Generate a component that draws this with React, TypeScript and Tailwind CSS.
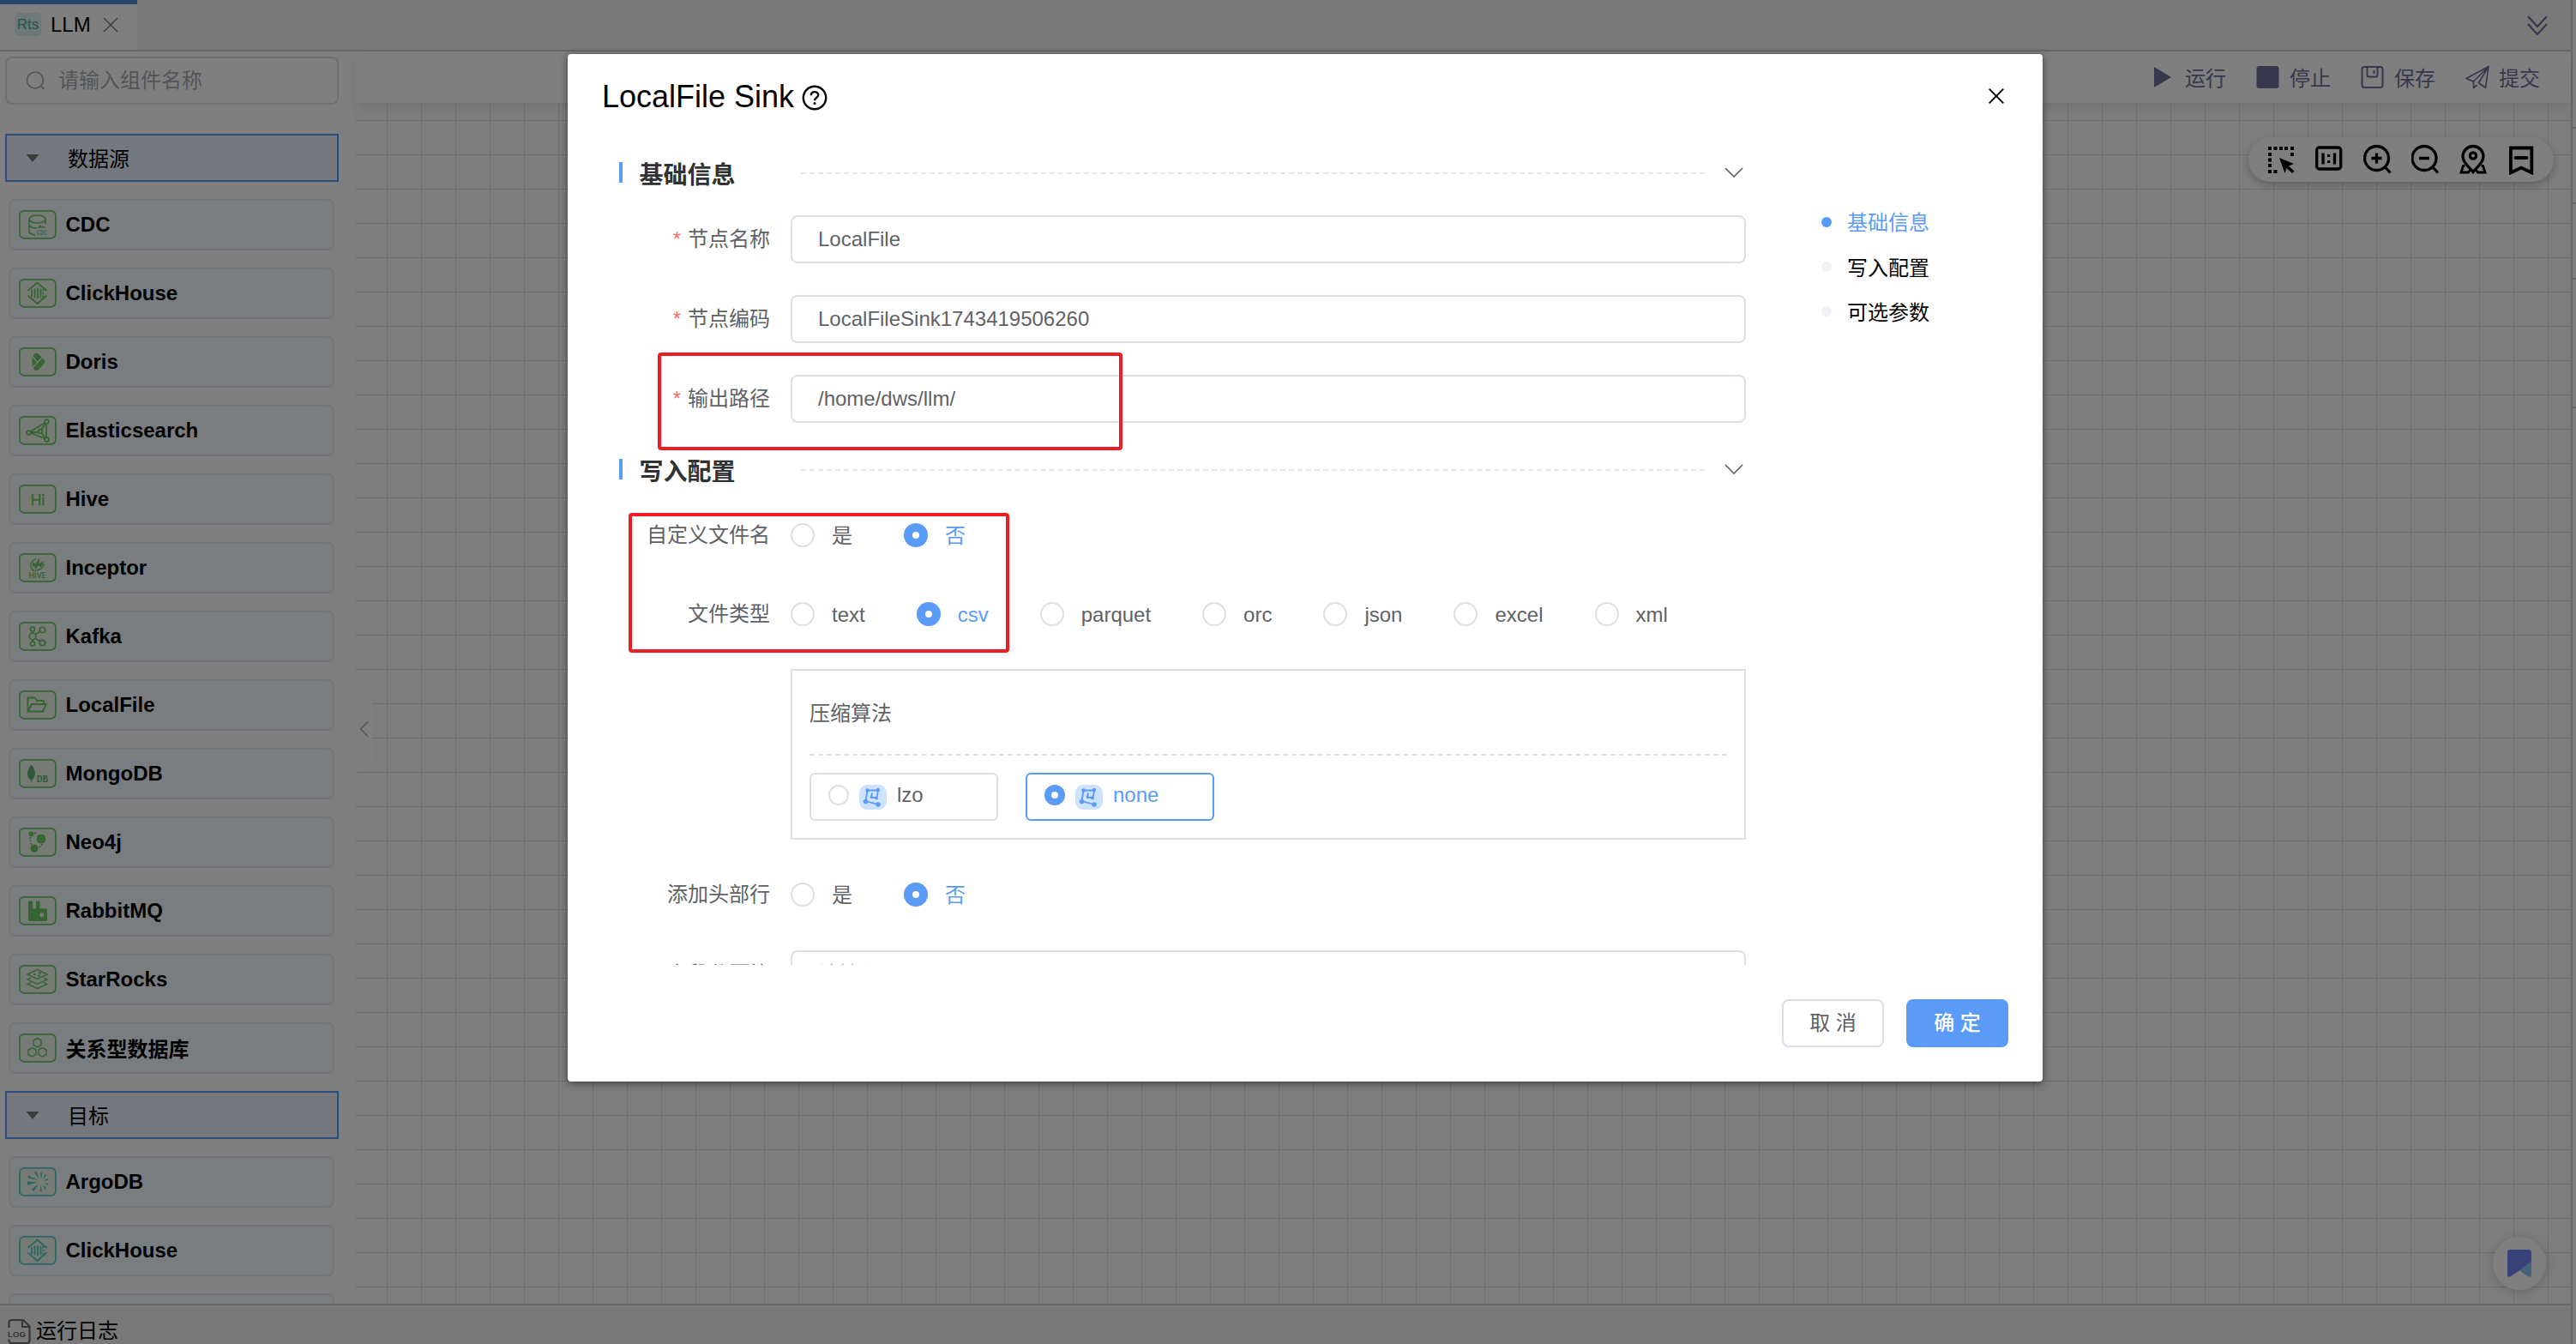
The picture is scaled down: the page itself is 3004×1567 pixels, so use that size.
import React from "react";

const GREEN = "#6cca66";
const TEAL = "#56cbc8";

/* ---------- palette icons, drawn on a 44 x 34 tile ---------- */

function Tile({ color = GREEN, children }: { color?: string; children: React.ReactNode }) {
  return (
    <svg width="44" height="34" viewBox="0 0 44 34" fill="none" stroke={color} strokeWidth="1.7" className="shrink-0">
      <rect x="0.9" y="0.9" width="42" height="32" rx="5" fill="#ecf7ec" />
      {children}
    </svg>
  );
}

const CdcIcon = () => (
  <Tile>
    <ellipse cx="21.5" cy="10.5" rx="9.5" ry="4.5" />
    <path d="M12 10.500v14c0 2.500 3 4 7 4.500M31 10.500v6M12 17c1 3 5 4 9 4M30.500 20h-7l2.500-2" />
    <text x="21" y="28.500" fontSize="7.500" textLength="12" lengthAdjust="spacingAndGlyphs" fontFamily="Liberation Serif" fontWeight="bold" fill={GREEN} stroke="none">CDC</text>
  </Tile>
);

const ClickHouseIcon = ({ color = GREEN }: { color?: string }) => (
  <Tile color={color}>
    <path d="M10.500 14 21.500 4.500 32.500 14M10.500 19.500 21.500 29 32.500 19.500" strokeWidth="1.800" />
    <path d="M15 13v8M18.500 11.500v11M22 11v12M25.500 11.500v11M28.500 12v2.500M28.500 16v2M28.500 19.500v2.500" strokeWidth="1.800" />
  </Tile>
);

const DorisIcon = () => (
  <Tile>
    <g fill={GREEN} stroke="none">
      <path d="M17 10.500c0-3 3-5 5.500-3l4 4-5 5z" />
      <path d="M15.500 12v11l5.500-5.500z" />
      <path d="M27.500 12.500 30 15.500c1 1.500 0 3-1 4l-6 6.500c-3 2.500-6.500 0-5.500-3z" />
    </g>
  </Tile>
);

const ElasticIcon = () => (
  <Tile>
    <path d="M12 19 32 7v20zM12 19h13M25 18l7-11M25 18l7 9" strokeWidth="1.800" />
    <g fill="#ecf7ec" strokeWidth="1.800">
      <circle cx="11.500" cy="19.500" r="2.400" />
      <circle cx="32.500" cy="6.500" r="2.400" />
      <circle cx="32.500" cy="27.500" r="2.400" />
      <circle cx="25" cy="18" r="2.400" />
    </g>
  </Tile>
);

const HiveIcon = () => (
  <Tile>
    <text x="13.500" y="23.500" fontSize="17" fontFamily="Lato" fill={GREEN} stroke={GREEN} strokeWidth="0.500">Hi</text>
  </Tile>
);

const InceptorIcon = () => (
  <Tile>
    <path d="M20 7c-5 1-7 5-6 9s4 5 7 4M29 12c0 4-3 7-8 8" strokeWidth="1.300" />
    <path d="M16 17V9l3 4 5-8v7l5-3-3 8-3-3-4 5-1-5z" fill={GREEN} stroke="none" />
    <text x="11.500" y="29" fontSize="8.500" textLength="20" lengthAdjust="spacingAndGlyphs" fontFamily="Lato" fontWeight="bold" fill={GREEN} stroke="none">HIVE</text>
  </Tile>
);

const KafkaIcon = () => (
  <Tile>
    <path d="M16 11v3M16 20v3M19 15l6-4M19 19l6 4" />
    <g strokeWidth="1.700">
      <circle cx="16" cy="17" r="3.800" />
      <circle cx="16" cy="8.500" r="2.500" />
      <circle cx="16" cy="25.500" r="2.500" />
      <circle cx="27.500" cy="9.500" r="3.200" />
      <circle cx="27.500" cy="24.500" r="3.200" />
    </g>
  </Tile>
);

const FolderIcon = () => (
  <Tile>
    <path d="M10.500 24.500V8.500h8l2.500 3.500h8v4M10.500 24.500l4.500-8.500h17l-4 8.500z" strokeWidth="1.900" />
  </Tile>
);

const MongoIcon = () => (
  <Tile>
    <path d="M14.500 7c5 6 6 12.500 0 18-6-5.500-5-12 0-18zM14.500 24v3.500" fill="#5fb070" stroke="#5fb070" strokeWidth="0.800" />
    <text x="20.500" y="26.500" fontSize="12" textLength="13.500" lengthAdjust="spacingAndGlyphs" fontFamily="Liberation Serif" fontWeight="bold" fill="#5fb070" stroke="none">DB</text>
  </Tile>
);

const NeoIcon = () => (
  <Tile>
    <g fill={GREEN} stroke="none">
      <circle cx="14.500" cy="7.500" r="3" />
      <circle cx="26" cy="13" r="5.500" />
      <circle cx="18" cy="24" r="4.500" />
    </g>
    <path d="M18 6.500c2-.5 3 0 4 .5M13.500 11c-.5 4 0 7 2 9.500M27 19c-.5 2-2 3-4 4" strokeDasharray="2 1.500" />
  </Tile>
);

const RabbitIcon = () => (
  <Tile>
    <path
      d="M11 6.500a1 1 0 0 1 1-1h3a1 1 0 0 1 1 1v8h4v-8a1 1 0 0 1 1-1h2.500a1 1 0 0 1 1 1v8H32a1 1 0 0 1 1 1V28a1 1 0 0 1-1 1H12a1 1 0 0 1-1-1zM24.500 19.500v4.500H29v-4.500z"
      fill={GREEN}
      fillRule="evenodd"
      stroke="none"
    />
  </Tile>
);

const StarRocksIcon = () => (
  <Tile>
    <path d="M21.500 5.500 33 11l-11.500 5.500L10 11zM14 15l-4 2 11.500 5.500L33 17l-4-2M14 20.500l-4 2 11.500 5L33 22.500l-4-2M17 11h3M23 9.500h3M22 12.500h3" strokeWidth="1.500" />
  </Tile>
);

const HexIcon = () => (
  <Tile>
    <path d="M21.500 5.500 26 8v5.500L21.500 16 17 13.500V8zM15.500 16.500 20 19v5.500L15.500 27 11 24.500V19zM27.500 16.500 32 19v5.500L27.500 27 23 24.500V19z" strokeWidth="1.500" />
  </Tile>
);

const ArgoIcon = () => (
  <Tile color={TEAL}>
    <g fill={TEAL} stroke="none">
      <path d="M23 15 11 9.500l-.5 3zM24 14 17.500 5.500l3-.5zM26 13.500 25 6l2.500.5zM22 17.500 10 16.500v4zM23 19.500l-8.500 6 3 2.500zM25.500 20.500 24.500 28h2.500zM28 20l2.500 6.500 1.500-2.500zM29 18l5 3v-2zM29 16l5-3.500v2.500zM28 14l2.500-6 1.500 2z" />
    </g>
  </Tile>
);

const SOURCES: [string, React.ComponentType][] = [
  ["CDC", CdcIcon],
  ["ClickHouse", ClickHouseIcon],
  ["Doris", DorisIcon],
  ["Elasticsearch", ElasticIcon],
  ["Hive", HiveIcon],
  ["Inceptor", InceptorIcon],
  ["Kafka", KafkaIcon],
  ["LocalFile", FolderIcon],
  ["MongoDB", MongoIcon],
  ["Neo4j", NeoIcon],
  ["RabbitMQ", RabbitIcon],
  ["StarRocks", StarRocksIcon],
];

/* ---------- left palette ---------- */

function GroupHeader({ label }: { label: string }) {
  return (
    <div className="mx-1.5 flex h-14 w-[389px] shrink-0 items-center border-2 border-[#5b9bf8] bg-[#ebf1fd] pl-[22px]">
      <svg width="16" height="9" viewBox="0 0 16 9" className="shrink-0">
        <path d="M0.500 0h15L8 9z" fill="#777" />
      </svg>
      <span className="ml-[33px] pt-[3px] text-2xl leading-8 text-black">{label}</span>
    </div>
  );
}

function PaletteItem({ label, children }: { label: React.ReactNode; children: React.ReactNode }) {
  return (
    <div className="ml-2.5 flex h-[60px] w-[380px] shrink-0 items-center rounded-lg border-2 border-[#e4e8f0] bg-[#f3fafe] pl-2.5">
      {children}
      <span className="ml-[10.5px] text-2xl leading-8 font-bold text-black">{label}</span>
    </div>
  );
}

function Sidebar() {
  return (
    <aside className="flex h-[1460px] w-[415px] shrink-0 flex-col overflow-hidden bg-white">
      <div className="mx-1.5 mt-1.5 flex h-14 w-[389px] shrink-0 items-center rounded-lg border-2 border-[#dcdfe6] pl-[22px]">
        <svg width="24" height="24" viewBox="0 0 24 24" fill="none" stroke="#a8abb2" strokeWidth="1.700">
          <circle cx="11" cy="11.500" r="9.500" />
          <path d="m17.500 18 4 4" />
        </svg>
        <span className="ml-[14px] text-2xl leading-8 text-[#a8abb2]">请输入组件名称</span>
      </div>
      <div className="mt-[34px] flex flex-col gap-5">
        <GroupHeader label="数据源" />
        {SOURCES.map(([label, Icon]) => (
          <PaletteItem key={label} label={label}>
            <Icon />
          </PaletteItem>
        ))}
        <PaletteItem label={<span className="block pt-[3px]">关系型数据库</span>}>
          <HexIcon />
        </PaletteItem>
        <GroupHeader label="目标" />
        <PaletteItem label="ArgoDB">
          <ArgoIcon />
        </PaletteItem>
        <PaletteItem label="ClickHouse">
          <ClickHouseIcon color={TEAL} />
        </PaletteItem>
        <PaletteItem label="">{null}</PaletteItem>
      </div>
    </aside>
  );
}

/* ---------- page chrome ---------- */

function TabBar() {
  return (
    <header className="flex h-[60px] shrink-0 border-b-2 border-[#cdcdcd] bg-[#f2f2f2]">
      <div className="flex h-[58px] w-40 items-center border-t-[5px] border-[#4f86d6] bg-white pb-1.5 pl-[17px]">
        <span className="flex h-[27px] w-[31px] items-center justify-center rounded-[5px] bg-[#dcf1f0] text-[17px] leading-none text-[#4fa88c]">
          Rts
        </span>
        <span className="ml-[11px] text-2xl leading-8 text-black">LLM</span>
        <svg width="18" height="18" viewBox="0 0 18 18" className="ml-[14px]" stroke="#808080" strokeWidth="1.600">
          <path d="m1 1 16 16M17 1 1 17" />
        </svg>
      </div>
      <svg width="24" height="24" viewBox="0 0 24 24" className="mt-[17px] mr-[27px] ml-auto" fill="none" stroke="#6f709b" strokeWidth="2.200">
        <path d="m1 2 11 12L23 2M1 11l11 12 11-12" />
      </svg>
    </header>
  );
}

function Action({ label, children }: { label: string; children: React.ReactNode }) {
  return (
    <div className="flex w-[122px] items-center gap-[11px]">
      <svg width="28" height="28" viewBox="0 0 28 28" fill="none" stroke="#6f709b" strokeWidth="2">
        {children}
      </svg>
      <span className="pt-[3px] text-2xl leading-8 text-[#6f709b]">{label}</span>
    </div>
  );
}

function Toolbar() {
  return (
    <div className="relative flex h-[60px] shrink-0 items-center justify-end bg-white pr-px shadow-[0_6px_12px_rgba(0,0,0,0.08)]">
      <Action label="运行">
        <path d="M3 2v24l20-12z" fill="#6f709b" stroke="none" />
      </Action>
      <Action label="停止">
        <rect x="0.500" y="1" width="26" height="26" rx="3" fill="#6f709b" stroke="none" />
      </Action>
      <Action label="保存">
        <rect x="1.500" y="2" width="24" height="24" rx="3" />
        <path d="M7.500 2v9.500a2 2 0 0 0 2 2h8a2 2 0 0 0 2-2V2M15.500 6v4" />
      </Action>
      <Action label="提交">
        <path d="M9.500 19 1 15.500 27 1.500l-3.500 25-8-6L27 1.500 9.500 19v7.500l4-3.500" strokeWidth="1.700" strokeLinejoin="round" />
      </Action>
    </div>
  );
}

function CanvasTools() {
  return (
    <div className="absolute top-10 right-5 flex h-[52px] w-[356px] items-center rounded-[26px] bg-white pl-[22px] shadow-[0_4px_10px_rgba(0,0,0,0.22)]">
      <div className="flex gap-[20px]">
        <svg width="36" height="36" viewBox="0 0 36 36">
          <g fill="#000">
            <path d="M1 3h4v4H1zM7.500 3h4v4h-4zM14 3h4v4h-4zM20 3h4v4h-4zM27 3h4v4h-4zM1 10h4v4H1zM1 16.500h4v4H1zM1 23h4v4H1zM1 30h4v4H1zM7.500 30h4v4h-4zM27 10h4v4h-4z" />
            <path d="m14 16 17 7-6 2.500 6.500 6-2.500 2.500-6.500-6-2 6z" />
          </g>
        </svg>
        <svg width="36" height="36" viewBox="0 0 36 36" fill="none" stroke="#000" strokeWidth="3.300">
          <rect x="1.700" y="4" width="28" height="25" rx="3" />
          <path d="M9 10.500v13M22.500 10.500v13" />
          <path d="M15.700 12v3M15.700 19v3" />
        </svg>
        <svg width="36" height="36" viewBox="0 0 36 36" fill="none" stroke="#000" strokeWidth="3.300">
          <circle cx="15.500" cy="16.500" r="14" />
          <path d="m25 26.500 6.500 7M9.500 16.500h12M15.500 10.500v12" />
        </svg>
        <svg width="36" height="36" viewBox="0 0 36 36" fill="none" stroke="#000" strokeWidth="3.300">
          <circle cx="15" cy="16.500" r="14" />
          <path d="m24.500 26.500 6.500 7M9 16.500h12" />
        </svg>
        <svg width="36" height="36" viewBox="0 0 36 36" fill="none" stroke="#000" strokeWidth="3.300">
          <path d="M16 32.500C12 27 4 22 4 14.500a12 12 0 0 1 24 0c0 7.500-8 12.500-12 18z" />
          <circle cx="16" cy="13.500" r="3.600" />
          <path d="M6.500 25.500h-2L2 33h8.500l2-3M25.500 25.500h2L30 33h-8.500l-2-3" strokeWidth="2.800" />
        </svg>
        <svg width="36" height="36" viewBox="0 0 36 36" fill="none" stroke="#000" strokeWidth="3.800">
          <path d="M3.900 4.500H28.300V33.300L16.100 27.500 3.900 33.300z" />
          <path d="M9.500 16h13" strokeLinecap="round" />
        </svg>
      </div>
    </div>
  );
}

function Canvas() {
  return (
    <div className="relative flex-1 overflow-hidden bg-[#fafafa] bg-[linear-gradient(to_right,#d6dedc_1px,transparent_1px),linear-gradient(to_bottom,#d6dedc_1px,transparent_1px)] bg-[length:40px_40px] bg-[position:36px_20px]">
      <div className="absolute top-[680px] left-0 flex h-[100px] w-5 items-center rounded-r-[20px] bg-white pl-1">
        <svg width="11" height="20" viewBox="0 0 11 20" fill="none" stroke="#b8bac0" strokeWidth="1.800">
          <path d="M10 1.500 1.500 10l8.500 8.500" />
        </svg>
      </div>
      <CanvasTools />
      <div className="absolute right-[29px] bottom-4 flex size-[62px] items-center justify-center rounded-full bg-white shadow-[0_2px_14px_rgba(0,0,0,0.16)]">
        <svg width="28" height="32" viewBox="0 0 28 32">
          <path d="M3 0h22a3 3 0 0 1 3 3v11L14 24.500 4 31c-2 1.500-4 1-4-2V3a3 3 0 0 1 3-3z" fill="#7089f2" />
          <path d="M28 14v15c0 3-2 3.500-4 2L14 24.500z" fill="#88c6f5" />
        </svg>
      </div>
    </div>
  );
}

/* ---------- dialog ---------- */

function SectionTitle({ label }: { label: string }) {
  return (
    <div className="flex h-7 shrink-0 items-center">
      <span className="h-6 w-1 bg-[#5b9bf8]" />
      <span className="ml-[19.5px] w-[188.5px] pt-[7px] text-[28px] leading-7 font-bold text-[#303133]">{label}</span>
      <span className="mt-0.5 w-[1054px] border-t-2 border-dashed border-[#e4e5ea]" />
      <svg width="22" height="12" viewBox="0 0 22 12" className="ml-[23px]" fill="none" stroke="#606266" strokeWidth="1.700">
        <path d="m1 1 10 10L21 1" />
      </svg>
    </div>
  );
}

function Row({ label, required, children }: { label: string; required?: boolean; children: React.ReactNode }) {
  return (
    <div className="flex h-14 shrink-0 items-center">
      <div className="flex w-44 shrink-0 justify-end text-2xl leading-8 text-[#606266]">
        {required && <span className="mr-2 text-[#f56c6c]">*</span>}
        {label}
      </div>
      <div className="ml-6 flex flex-1 items-center">{children}</div>
    </div>
  );
}

function Field({ value, placeholder }: { value?: string; placeholder?: string }) {
  return (
    <div className="flex h-14 w-full items-center rounded-lg border-2 border-[#dcdfe6] bg-white pl-[30px] text-2xl leading-8 text-[#606266]">
      {value ?? <span className="text-[#a8abb2]">{placeholder}</span>}
    </div>
  );
}

function Radio({ label, checked }: { label: string; checked?: boolean }) {
  return (
    <label className="mr-[60px] flex items-center">
      {checked ? (
        <span className="flex size-7 items-center justify-center rounded-full bg-[#5b9bf8]">
          <span className="size-2 rounded-full bg-white" />
        </span>
      ) : (
        <span className="size-7 rounded-full border-2 border-[#dcdfe6]" />
      )}
      <span className={checked ? "ml-5 pt-px text-2xl leading-8 text-[#5b9bf8]" : "ml-5 pt-px text-2xl leading-8 text-[#606266]"}>{label}</span>
    </label>
  );
}

function CodecOption({ label, checked }: { label: string; checked?: boolean }) {
  return (
    <div
      className={
        checked
          ? "flex h-14 w-[220px] items-center rounded-md border-2 border-[#5b9bf8] pl-5 text-[#5b9bf8]"
          : "flex h-14 w-[220px] items-center rounded-md border-2 border-[#dcdfe6] pl-5 text-[#606266]"
      }
    >
      {checked ? (
        <span className="mb-1 flex size-6 items-center justify-center rounded-full bg-[#5b9bf8]">
          <span className="size-2 rounded-full bg-white" />
        </span>
      ) : (
        <span className="mb-1 size-6 rounded-full border-2 border-[#dcdfe6]" />
      )}
      <svg width="32" height="29" viewBox="0 0 32 29" className="ml-3" fill="none" stroke="#5b9bf8" strokeWidth="1.800">
        <rect width="32" height="29" rx="9" fill="#cfe2fd" stroke="none" />
        <path d="M9.500 6.500h12.500l-1.500 9M9.500 6.500l-2 12.500L22 23M15 9.500l-1 5.500h6.500" />
        <g fill="#5b9bf8" stroke="none">
          <circle cx="9.500" cy="6.500" r="2.200" />
          <circle cx="22" cy="6" r="2.200" />
          <circle cx="20" cy="15.500" r="2" />
          <circle cx="7.500" cy="19.500" r="2.800" />
          <circle cx="22" cy="23" r="2.800" />
          <circle cx="14" cy="14" r="1.400" />
        </g>
      </svg>
      <span className="mb-1 ml-3 text-2xl leading-8">{label}</span>
    </div>
  );
}

function AnchorItem({ label, active }: { label: string; active?: boolean }) {
  return (
    <div className="flex h-[52px] items-center">
      <span className={active ? "mb-0.5 size-3 rounded-full bg-[#5b9bf8]" : "mb-0.5 size-3 rounded-full bg-[#f0f2f5]"} />
      <span className={active ? "ml-[18px] text-2xl leading-8 text-[#5b9bf8]" : "ml-[18px] pt-px text-2xl leading-8 text-black"}>{label}</span>
    </div>
  );
}

function Dialog() {
  return (
    <section className="relative flex h-[1198px] w-[1720px] flex-col rounded bg-white shadow-[0_2px_10px_rgba(0,0,0,0.5)]">
      <div className="flex h-[98px] shrink-0 items-center pr-[45px] pl-10">
        <h1 className="pt-0.5 text-4xl leading-10 text-black">LocalFile Sink</h1>
        <svg width="30" height="30" viewBox="0 0 30 30" className="mt-1 ml-[9px]" fill="none" stroke="#000" strokeWidth="2.400">
          <circle cx="15" cy="15" r="13.200" />
          <path d="M10.800 12.300c0-2.600 1.800-4.200 4.200-4.200s4.200 1.600 4.200 3.800c0 2.700-4.200 3-4.200 6.300" />
          <circle cx="15" cy="21.500" r="1.500" fill="#000" stroke="none" />
        </svg>
        <svg width="18" height="18" viewBox="0 0 18 18" className="ml-auto" stroke="#000" strokeWidth="1.900">
          <path d="m0.700 0.700 16.600 16.600M17.300 0.700 0.700 17.300" />
        </svg>
      </div>

      <div className="flex h-[964px] shrink-0 overflow-hidden pl-[60px]">
        <div className="flex w-[1314px] shrink-0 flex-col pt-[26px]">
          <SectionTitle label="基础信息" />
          <div className="mt-9 flex flex-col gap-[37px]">
            <Row label="节点名称" required>
              <Field value="LocalFile" />
            </Row>
            <Row label="节点编码" required>
              <Field value="LocalFileSink1743419506260" />
            </Row>
            <Row label="输出路径" required>
              <Field value="/home/dws/llm/" />
            </Row>
          </div>
          <div className="h-10 shrink-0" />
          <SectionTitle label="写入配置" />
          <div className="mt-[35px] flex flex-col gap-9">
            <Row label="自定义文件名">
              <Radio label="是" />
              <Radio label="否" checked />
            </Row>
            <Row label="文件类型">
              <Radio label="text" />
              <Radio label="csv" checked />
              <Radio label="parquet" />
              <Radio label="orc" />
              <Radio label="json" />
              <Radio label="excel" />
              <Radio label="xml" />
            </Row>
            <div className="ml-[200px] flex h-[199px] shrink-0 flex-col border-2 border-[#dcdfe6] px-5">
              <div className="flex h-[99px] shrink-0 items-center border-b-2 border-dashed border-[#dcdfe6] pt-0.5 text-2xl leading-8 text-[#606266]">
                压缩算法
              </div>
              <div className="mt-5 flex gap-8">
                <CodecOption label="lzo" />
                <CodecOption label="none" checked />
              </div>
            </div>
            <Row label="添加头部行">
              <Radio label="是" />
              <Radio label="否" checked />
            </Row>
            <div className="mt-px">
              <Row label="字段分隔符">
                <Field placeholder="请输入" />
              </Row>
            </div>
          </div>
        </div>
        <nav className="ml-[88px] flex flex-col pt-[73px]">
          <AnchorItem label="基础信息" active />
          <AnchorItem label="写入配置" />
          <AnchorItem label="可选参数" />
        </nav>
      </div>

      <div className="mt-auto flex justify-end gap-[26px] pr-10 pb-10">
        <button className="h-14 w-[119px] rounded-lg border-2 border-[#dcdfe6] text-2xl leading-8 text-[#606266]">取 消</button>
        <button className="h-14 w-[119px] rounded-lg bg-[#5b9bf8] text-2xl leading-8 font-medium text-white">确 定</button>
      </div>

      <div className="absolute top-[348px] left-[105px] h-[114px] w-[542px] rounded-sm border-4 border-[#ee1c24]" />
      <div className="absolute top-[535px] left-[71px] h-[163px] w-[444px] rounded-sm border-4 border-[#ee1c24]" />
    </section>
  );
}

export default function App() {
  return (
    <div className="relative flex h-[1567px] w-[3004px] overflow-hidden bg-white font-['Liberation_Sans','Noto_Sans_CJK_SC',sans-serif]">
      <div className="flex w-[3000px] shrink-0 flex-col border-r-2 border-[#cdcdcd]">
        <TabBar />
        <div className="flex h-[1460px] shrink-0">
          <Sidebar />
          <main className="flex flex-1 flex-col">
            <div className="relative z-10">
              <Toolbar />
            </div>
            <Canvas />
          </main>
        </div>
        <footer className="flex flex-1 items-center border-t-2 border-[#cdcdcd] bg-[#f2f2f2] pt-3.5 pl-[9px]">
          <svg width="27" height="29" viewBox="0 0 27 29" fill="none" stroke="#6c6c6c" strokeWidth="2.200">
            <path d="M1.500 10V4a3 3 0 0 1 3-3H18l7.500 7.500V25a3 3 0 0 1-3 3h-18a3 3 0 0 1-3-3v-1.500M17 1v8h8.500" />
            <text x="0" y="21" fontSize="9.500" textLength="21" lengthAdjust="spacingAndGlyphs" fontWeight="bold" fontFamily="Liberation Sans" fill="#6c6c6c" stroke="none">LOG</text>
          </svg>
          <span className="ml-1.5 text-2xl leading-8 text-black">运行日志</span>
        </footer>
      </div>
      <div className="flex w-1 shrink-0 flex-col bg-white">
        <div className="h-[150px] shrink-0 border-b-2 border-[#cdcdcd]" />
        <div className="h-[88px] shrink-0 border-b-2 border-[#cdcdcd]" />
        <div className="h-[88px] shrink-0 border-b-2 border-[#cdcdcd]" />
        <div className="h-[150px] shrink-0 border-b-2 border-[#cdcdcd]" />
      </div>

      <div className="absolute inset-0 z-20 bg-black/50 pt-[63px] pl-[662px]">
        <Dialog />
      </div>
    </div>
  );
}
